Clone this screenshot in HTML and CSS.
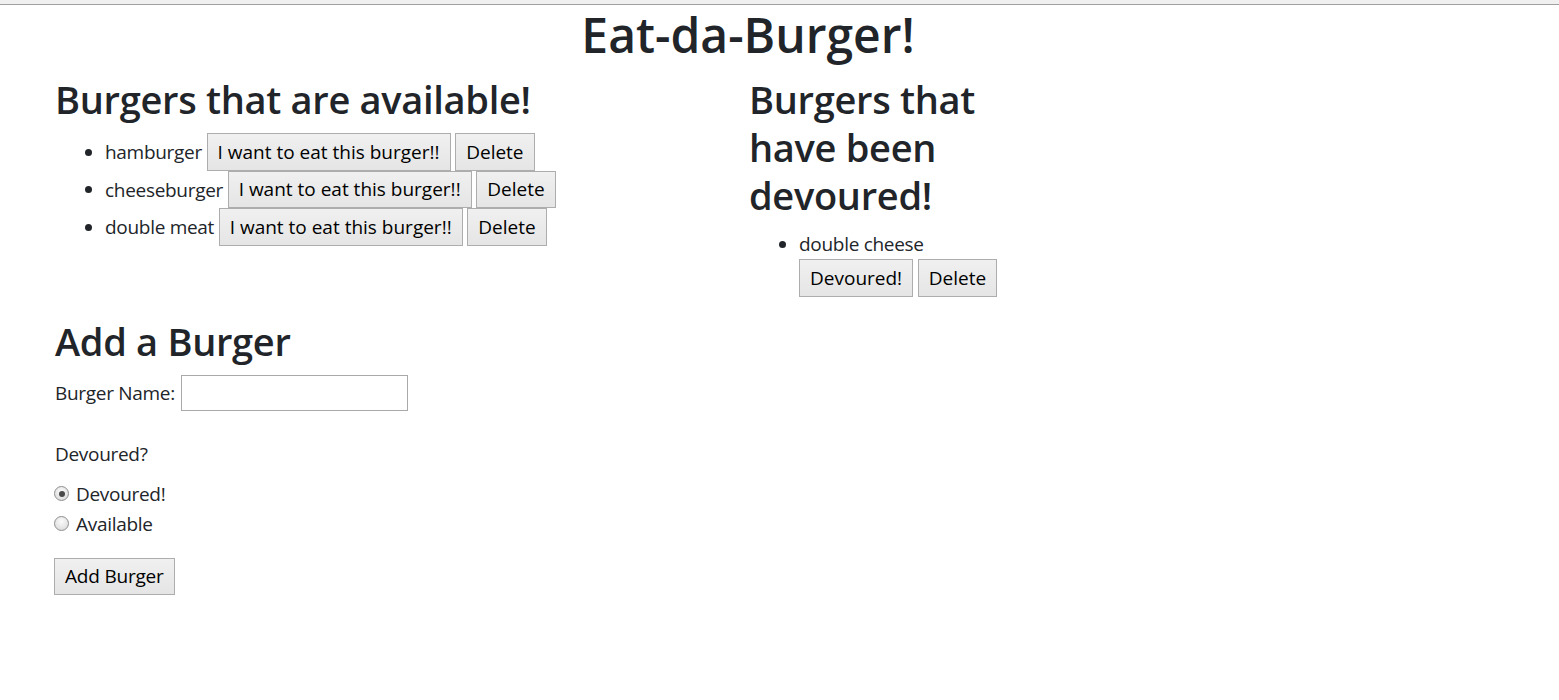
FILE: index.html
```html
<!DOCTYPE html>
<html lang="en">
<head>
<meta charset="utf-8">
<title>Eat-da-Burger!</title>
<link rel="stylesheet" href="styles.css">
</head>
<body>
<div class="chrome"></div>
<div class="page">
  <h1 class="title">Eat-da-Burger!</h1>
  <div class="row">
    <div class="col col-left">
      <h2 class="heading">Burgers that are available!</h2>
      <ul class="list">
        <li>hamburger <button class="btn">I want to eat this burger!!</button> <button class="btn">Delete</button></li>
        <li>cheeseburger <button class="btn">I want to eat this burger!!</button> <button class="btn">Delete</button></li>
        <li>double meat <button class="btn">I want to eat this burger!!</button> <button class="btn">Delete</button></li>
      </ul>
    </div>
    <div class="col col-right">
      <h2 class="heading">Burgers that have been devoured!</h2>
      <ul class="list">
        <li>double cheese <button class="btn">Devoured!</button> <button class="btn">Delete</button></li>
      </ul>
    </div>
  </div>
  <div class="add">
    <h2 class="heading">Add a Burger</h2>
    <form class="form">
      <div class="name-row">
        <label class="label" for="bn">Burger Name:</label>
        <input class="input" id="bn" type="text">
      </div>
      <div class="group">
        <div class="label-block">Devoured?</div>
        <label class="radio"><input type="radio" name="dev" checked><span>Devoured!</span></label>
        <label class="radio"><input type="radio" name="dev"><span>Available</span></label>
      </div>
      <button class="btn btn-add" type="button">Add Burger</button>
    </form>
  </div>
</div>
</body>
</html>
```
FILE: styles.css
```css
* { box-sizing: border-box; }
html, body { margin: 0; padding: 0; background: #fff; }
body {
  font-family: "Open Sans", "Noto Sans", sans-serif;
  font-size: 19px;
  letter-spacing: -0.3px;
  line-height: 30px;
  color: #212529;
}
.chrome {
  height: 5px;
  background: #f0f0f0;
  border-bottom: 1px solid #a0a0a0;
}
.page {
  width: 1416px;
  margin-left: 40px;
}
.title {
  margin: 0 0 10px;
  font-size: 48px;
  line-height: 60px;
  font-weight: 600;
  letter-spacing: 0;
  text-align: center;
}
.row {
  display: flex;
  margin-left: 15px;
}
.col-left { width: 694px; }
.col-right { width: 260px; }
.heading {
  margin: 0 0 10px;
  font-size: 38px;
  line-height: 48px;
  font-weight: 600;
  letter-spacing: -0.3px;
}
.list {
  margin: 0 0 20px;
  padding-left: 50px;
}
.btn {
  font-family: inherit;
  font-size: 19px;
  letter-spacing: 0;
  line-height: 30px;
  padding: 2.75px 10px;
  margin: 0;
  border: 1px solid #adadad;
  border-radius: 0;
  background: linear-gradient(#f0f0f0, #e5e5e5);
  color: #000;
}
.btn-add { margin-left: -1px; letter-spacing: -0.2px; }
.add { margin-left: 15px; }
.form { margin: 0; }
.name-row {
  display: flex;
  align-items: center;
  height: 36px;
  margin-bottom: 28px;
}
.label { margin-right: 6px; }
.input {
  width: 227px;
  height: 36px;
  border: 1px solid #a9a9a9;
  padding: 2px 3px;
  font-family: inherit;
  font-size: 19px;
}
.group { margin-bottom: 19px; }
.label-block { margin-bottom: 10px; }
.radio {
  display: flex;
  align-items: center;
  height: 30px;
}
.radio input {
  appearance: none;
  -webkit-appearance: none;
  width: 15px;
  height: 15px;
  margin: 0 7px 0 -1px;
  border: 1px solid #8e8e8e;
  border-radius: 50%;
  background: radial-gradient(circle at 50% 35%, #fbfbfb, #d6d6d6);
  position: relative;
}
.radio input:checked::after {
  content: "";
  position: absolute;
  left: 3.5px;
  top: 3.5px;
  width: 6px;
  height: 6px;
  border-radius: 50%;
  background: #4a4a4a;
}
```
